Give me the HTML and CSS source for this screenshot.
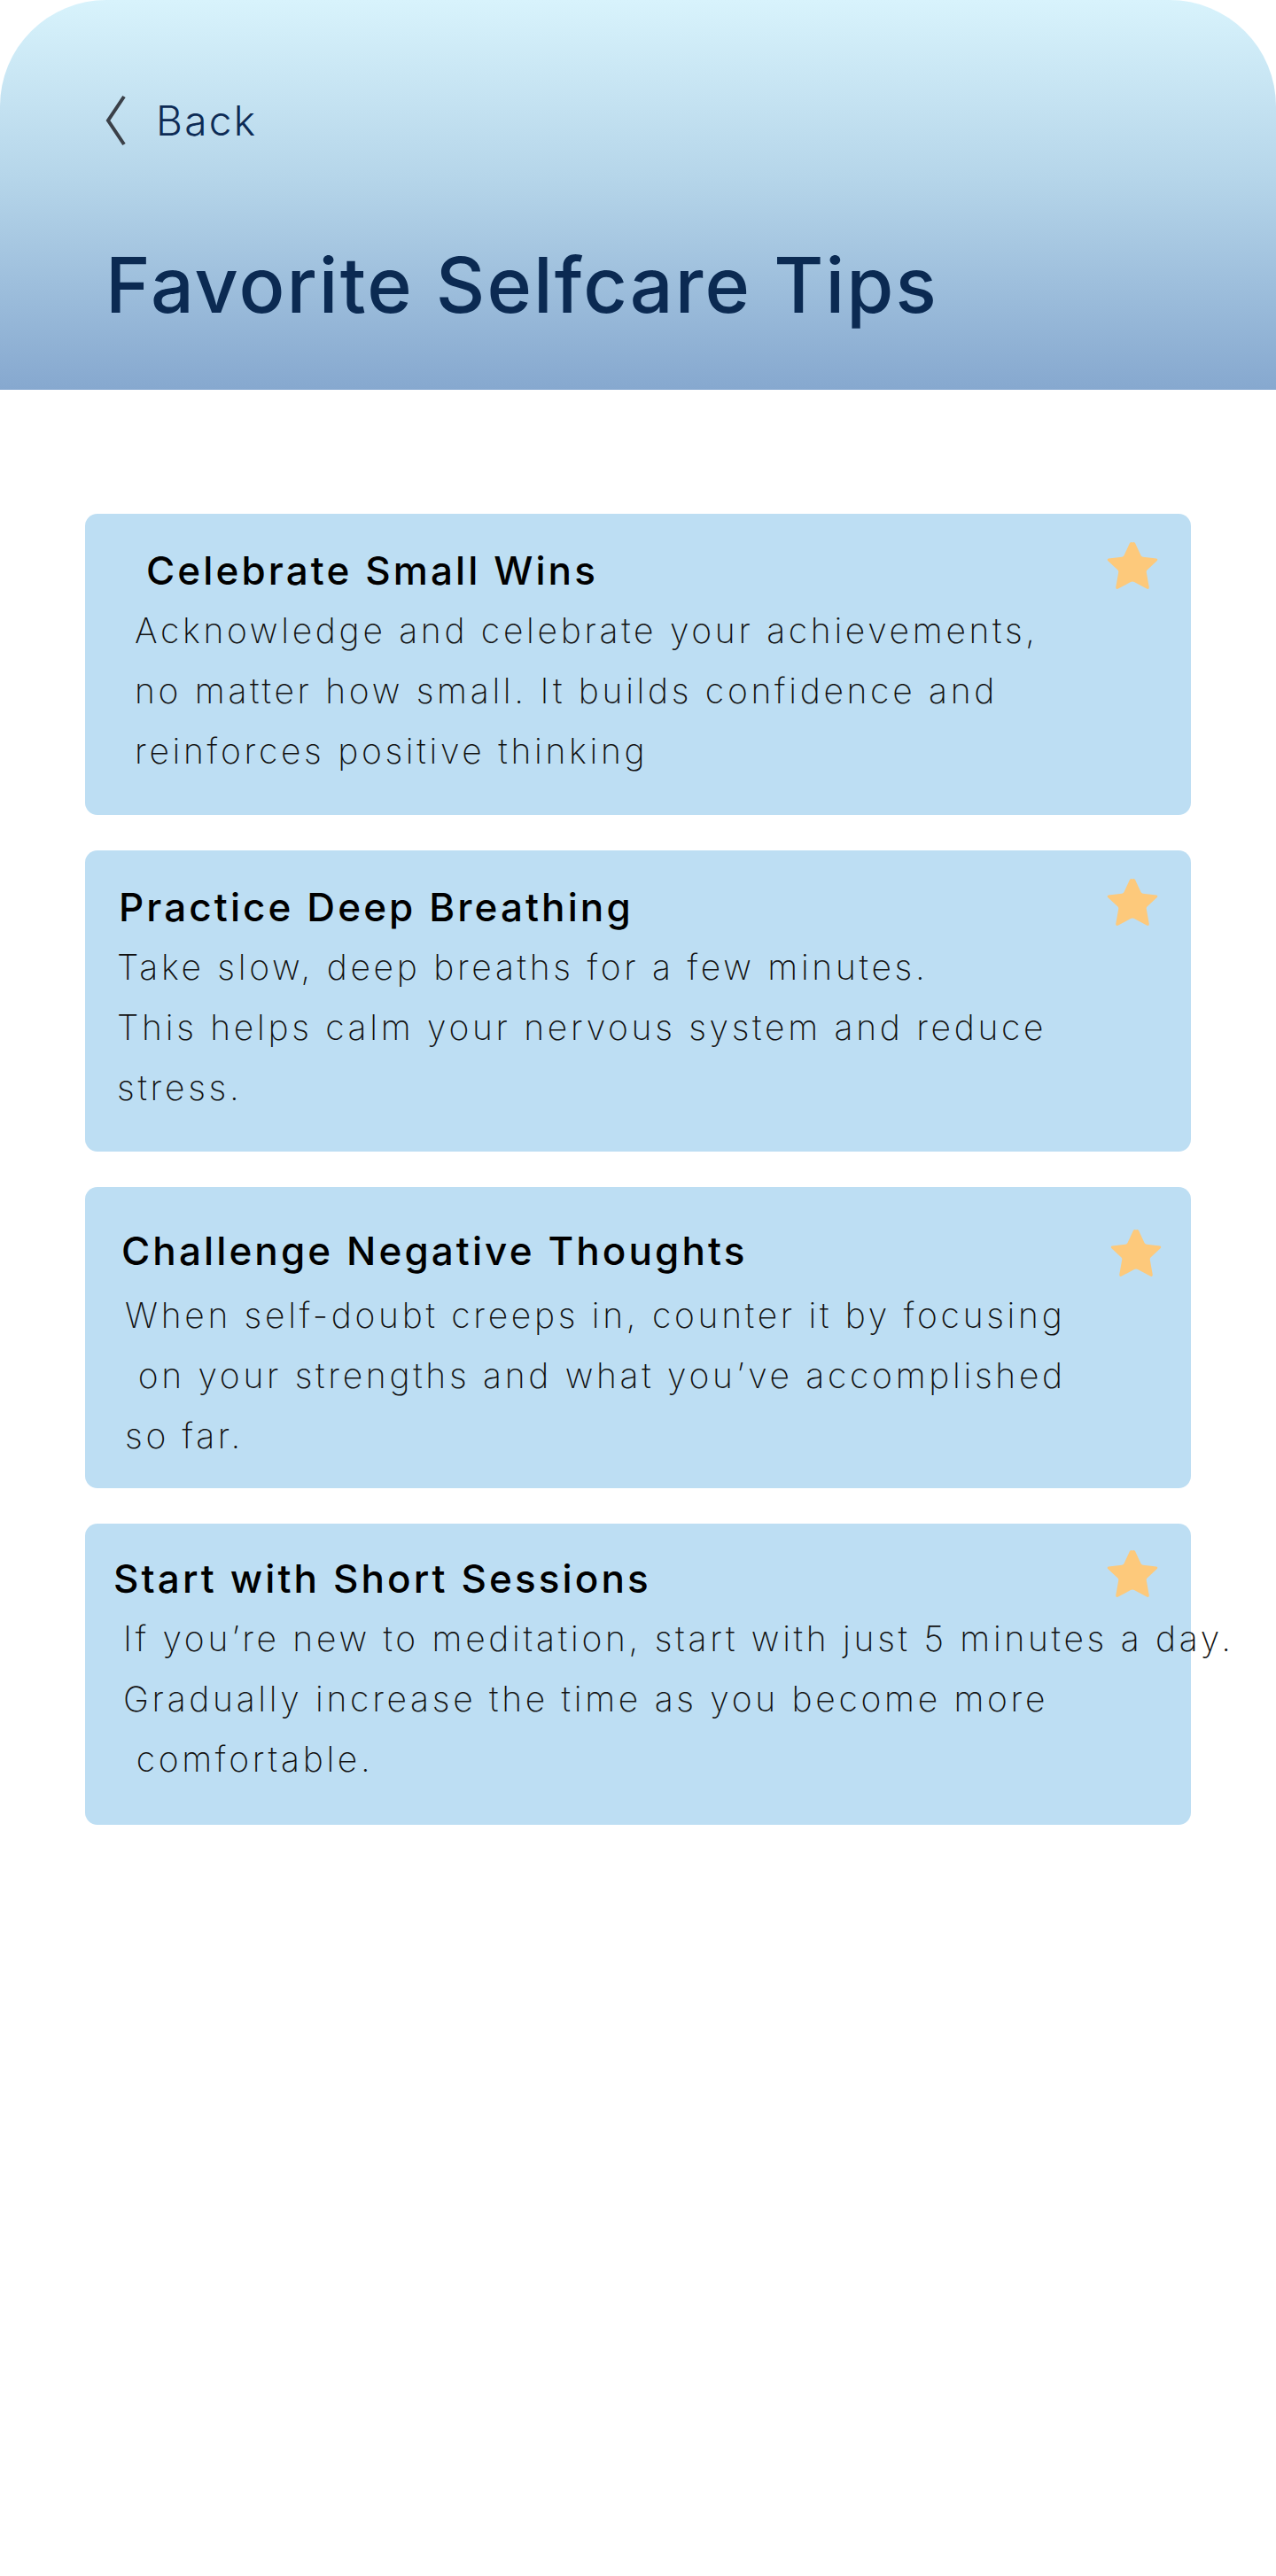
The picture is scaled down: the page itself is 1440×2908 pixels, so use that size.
FILE: index.html
```html
<!DOCTYPE html>
<html lang="en">
<head>
<meta charset="utf-8">
<title>Favorite Selfcare Tips</title>
<link rel="stylesheet" href="styles.css">
</head>
<body>
<div class="page">
  <header class="hero">
    <a class="back" href="#">
      <svg class="back__icon" width="30" height="58" viewBox="0 0 30 58" aria-hidden="true">
        <path d="M25 2 L7 29 L25 56" fill="none" stroke="#3b4048" stroke-width="4" stroke-linejoin="miter" stroke-linecap="butt"/>
      </svg>
      <span class="back__label">Back</span>
    </a>
    <h1 class="hero__title">Favorite Selfcare Tips</h1>
  </header>

  <main class="tips">
    <article class="tip tip--one">
      <div class="tip__head">
        <h2 class="tip__title">Celebrate Small Wins</h2>
        <svg class="tip__star" viewBox="0 0 60 57" aria-hidden="true"><path d="M30 2.5 Q31.5 1.5 33 3 L39.5 17 Q40.5 18.5 42 18.7 L57 20.5 Q59 21.3 57.8 23 L46.5 33.5 Q45.5 34.8 45.8 36.3 L48.8 53 Q48.8 55.5 46.5 54.8 L32 47 Q30 46 28 47 L13.5 54.8 Q11.2 55.5 11.2 53 L14.2 36.3 Q14.5 34.8 13.5 33.5 L2.2 23 Q1 21.3 3 20.5 L18 18.7 Q19.5 18.5 20.5 17 L27 3 Q28.5 1.5 30 2.5 Z" fill="#fdc97b"/></svg>
      </div>
      <p class="tip__body">Acknowledge and celebrate your achievements,
no matter how small. It builds confidence and
reinforces positive thinking</p>
    </article>

    <article class="tip tip--two">
      <div class="tip__head">
        <h2 class="tip__title">Practice Deep Breathing</h2>
        <svg class="tip__star" viewBox="0 0 60 57" aria-hidden="true"><path d="M30 2.5 Q31.5 1.5 33 3 L39.5 17 Q40.5 18.5 42 18.7 L57 20.5 Q59 21.3 57.8 23 L46.5 33.5 Q45.5 34.8 45.8 36.3 L48.8 53 Q48.8 55.5 46.5 54.8 L32 47 Q30 46 28 47 L13.5 54.8 Q11.2 55.5 11.2 53 L14.2 36.3 Q14.5 34.8 13.5 33.5 L2.2 23 Q1 21.3 3 20.5 L18 18.7 Q19.5 18.5 20.5 17 L27 3 Q28.5 1.5 30 2.5 Z" fill="#fdc97b"/></svg>
      </div>
      <p class="tip__body">Take slow, deep breaths for a few minutes.
This helps calm your nervous system and reduce
stress.</p>
    </article>

    <article class="tip tip--three">
      <div class="tip__head">
        <h2 class="tip__title">Challenge Negative Thoughts</h2>
        <svg class="tip__star" viewBox="0 0 60 57" aria-hidden="true"><path d="M30 2.5 Q31.5 1.5 33 3 L39.5 17 Q40.5 18.5 42 18.7 L57 20.5 Q59 21.3 57.8 23 L46.5 33.5 Q45.5 34.8 45.8 36.3 L48.8 53 Q48.8 55.5 46.5 54.8 L32 47 Q30 46 28 47 L13.5 54.8 Q11.2 55.5 11.2 53 L14.2 36.3 Q14.5 34.8 13.5 33.5 L2.2 23 Q1 21.3 3 20.5 L18 18.7 Q19.5 18.5 20.5 17 L27 3 Q28.5 1.5 30 2.5 Z" fill="#fdc97b"/></svg>
      </div>
      <p class="tip__body">When self-doubt creeps in, counter it by focusing
 on your strengths and what you’ve accomplished
so far.</p>
    </article>

    <article class="tip tip--four">
      <div class="tip__head">
        <h2 class="tip__title">Start with Short Sessions</h2>
        <svg class="tip__star" viewBox="0 0 60 57" aria-hidden="true"><path d="M30 2.5 Q31.5 1.5 33 3 L39.5 17 Q40.5 18.5 42 18.7 L57 20.5 Q59 21.3 57.8 23 L46.5 33.5 Q45.5 34.8 45.8 36.3 L48.8 53 Q48.8 55.5 46.5 54.8 L32 47 Q30 46 28 47 L13.5 54.8 Q11.2 55.5 11.2 53 L14.2 36.3 Q14.5 34.8 13.5 33.5 L2.2 23 Q1 21.3 3 20.5 L18 18.7 Q19.5 18.5 20.5 17 L27 3 Q28.5 1.5 30 2.5 Z" fill="#fdc97b"/></svg>
      </div>
      <p class="tip__body">If you’re new to meditation, start with just 5 minutes a day.
Gradually increase the time as you become more
 comfortable.</p>
    </article>
  </main>
</div>
</body>
</html>
```

FILE: styles.css
```css
* { box-sizing: border-box; }

html, body {
  margin: 0;
  padding: 0;
  background: #ffffff;
}

body {
  font-family: "Inter", "Noto Sans", sans-serif;
  color: #000;
}

.page {
  width: 1440px;
  min-height: 2908px;
  background: #ffffff;
}

.hero {
  height: 440px;
  border-radius: 120px 120px 0 0;
  background: linear-gradient(180deg, #d8f3fc 0%, #b6d6ea 45%, #86a8cf 100%);
  padding: 108px 0 0 115px;
  display: flex;
  flex-direction: column;
}

.back {
  display: flex;
  align-items: center;
  gap: 31px;
  text-decoration: none;
  height: 56px;
}

.back__icon {
  display: block;
  width: 30px;
  height: 58px;
  flex: none;
}

.back__label {
  font-size: 46px;
  font-weight: 300;
  color: #0d2b55;
  line-height: 1;
  letter-spacing: 2.3px;
}

.hero__title {
  margin: 115px 0 0 4px;
  font-size: 86px;
  font-weight: 500;
  color: #0b2a52;
  line-height: 1;
  letter-spacing: 2.1px;
}

.tips {
  padding: 140px 96px 0;
  display: flex;
  flex-direction: column;
  gap: 40px;
}

.tip {
  height: 340px;
  background: #bddef3;
  border-radius: 14px;
  padding: 30px 36px 0 0;
  display: flex;
  flex-direction: column;
}

.tip__head {
  display: flex;
  justify-content: space-between;
  align-items: flex-start;
}

.tip__title {
  margin: 8px 0 0;
  font-size: 44px;
  font-weight: 500;
  line-height: 52px;
  letter-spacing: 3.1px;
  white-space: pre;
}

.tip__star {
  width: 60px;
  height: 57px;
  flex: none;
  display: block;
}

.tip__body {
  margin: 8px 0 0;
  font-size: 39px;
  font-weight: 200;
  line-height: 68px;
  letter-spacing: 3.7px;
  white-space: pre;
  color: #111;
}

.tip--one .tip__title { padding-left: 69px; }
.tip--one .tip__body { padding-left: 56px; }

.tip--two .tip__title { padding-left: 38px; }
.tip--two .tip__body { padding-left: 36px; }

.tip--three { padding-top: 46px; padding-right: 32px; }
.tip--three .tip__title { margin-top: 0; padding-left: 41px; }
.tip--three .tip__body { padding-left: 45px; }

.tip--four { padding-top: 28px; }
.tip--four .tip__title { padding-left: 32px; }
.tip--four .tip__body { padding-left: 43px; }
```
